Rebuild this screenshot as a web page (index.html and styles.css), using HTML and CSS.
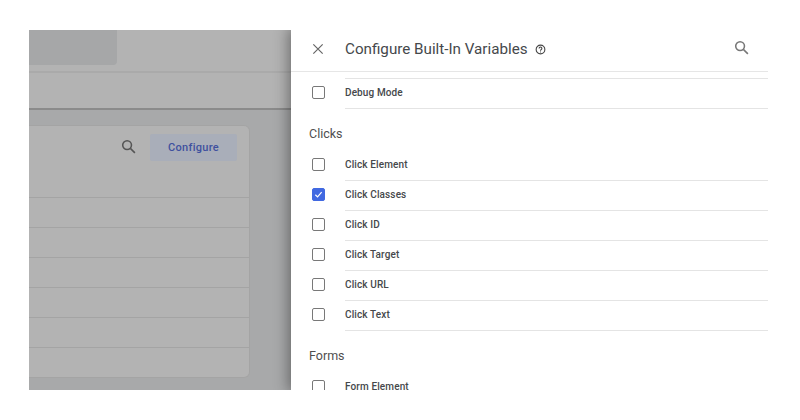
FILE: index.html
```html
<!DOCTYPE html>
<html lang="en">
<head>
<meta charset="utf-8">
<title>Configure Built-In Variables</title>
<link rel="stylesheet" href="styles.css">
</head>
<body>
<div class="frame">
  <div class="backdrop">
    <div class="topbar"><div class="tab"></div></div>
    <div class="subbar"></div>
    <div class="content">
      <div class="card">
        <div class="card-head">
          <svg class="icon-search" viewBox="0 0 24 24"><circle cx="10" cy="10" r="6.2"/><path d="M14.6 14.6 21 21"/></svg>
          <div class="btn">Configure</div>
        </div>
        <div class="card-row"></div>
        <div class="card-row"></div>
        <div class="card-row"></div>
        <div class="card-row"></div>
        <div class="card-row"></div>
        <div class="card-row"></div>
      </div>
    </div>
  </div>
  <div class="drawer">
    <div class="drawer-head">
      <svg class="icon-close" viewBox="0 0 24 24"><path d="M5 5 19 19M19 5 5 19"/></svg>
      <span class="title">Configure Built-In Variables</span>
      <svg class="icon-help" viewBox="0 0 24 24"><circle cx="12" cy="12" r="9.5"/><path d="M9 9.6a3 3 0 1 1 4.7 2.5c-1.100.7-1.700 1.300-1.700 2.400"/><path d="M12 16.400v2"/></svg>
      <svg class="icon-search drawer-search" viewBox="0 0 24 24"><circle cx="10" cy="10" r="6.2"/><path d="M14.6 14.6 21 21"/></svg>
    </div>
    <div class="list">
      <div class="row top"><span class="box"></span><span class="label">Debug Mode</span></div>
      <div class="group">Clicks</div>
      <div class="row"><span class="box"></span><span class="label">Click Element</span></div>
      <div class="row"><span class="box checked"><svg viewBox="0 0 14 14"><path d="M3 7.300 5.800 10 11 4"/></svg></span><span class="label">Click Classes</span></div>
      <div class="row"><span class="box"></span><span class="label">Click ID</span></div>
      <div class="row"><span class="box"></span><span class="label">Click Target</span></div>
      <div class="row"><span class="box"></span><span class="label">Click URL</span></div>
      <div class="row"><span class="box"></span><span class="label">Click Text</span></div>
      <div class="group">Forms</div>
      <div class="row"><span class="box"></span><span class="label">Form Element</span></div>
    </div>
  </div>
</div>
</body>
</html>
```
FILE: styles.css
```css
html, body { margin: 0; padding: 0; background: #fff; }
body { width: 800px; height: 420px; overflow: hidden; font-family: Roboto, "Liberation Sans", sans-serif; }
.frame { display: flex; width: 739px; height: 360px; margin: 30px 0 0 29px; overflow: hidden; }

.backdrop { width: 262px; flex: none; display: flex; flex-direction: column; background: #a8a9aa; }
.topbar { height: 41px; flex: none; background: #b3b3b3; border-bottom: 2px solid #aaa; }
.tab { width: 88px; height: 35px; background: #a6a7a8; border-radius: 0 0 4px 0; }
.subbar { height: 35px; flex: none; background: #b3b3b3; border-bottom: 2px solid #8b8b8b; }
.content { flex: 1; padding-top: 15px; }
.card { width: 221px; height: 253px; background: #b3b3b3; border: 1px solid #a4a4a4; border-left: 0; border-radius: 0 6px 6px 0; box-sizing: border-box; }
.card-head { height: 72px; display: flex; align-items: flex-start; justify-content: flex-end; padding: 8px 12px 0 0; gap: 13.500px; border-bottom: 1px solid #a4a4a4; box-sizing: border-box; }
.card-head .icon-search { margin-top: 4px; }
.btn { width: 87px; height: 27px; background: #a9aeb9; border-radius: 2px; color: #3f519f; font-size: 11px; font-weight: 500; letter-spacing: .3px; display: flex; align-items: center; justify-content: center; }
.card-row { height: 30px; border-bottom: 1px solid #a4a4a4; box-sizing: border-box; }
.card-row:last-child { border-bottom: 0; }

.icon-search { width: 17px; height: 17px; flex: none; fill: none; stroke: #555; stroke-width: 2.200; }

.drawer { flex: 1; position: relative; background: #fff; box-shadow: 0 0 14px 2px rgba(0, 0, 0, .42); display: flex; flex-direction: column; min-width: 0; }
.drawer-head { height: 42px; flex: none; display: flex; align-items: center; border-bottom: 1px solid #e6e6e6; box-sizing: border-box; padding-bottom: 4px; }
.icon-close { width: 16px; height: 16px; margin-left: 19px; fill: none; stroke: #666; stroke-width: 1.800; flex: none; }
.title { margin-left: 19px; font-size: 15.200px; color: #45484b; white-space: nowrap; }
.icon-help { width: 11px; height: 11px; margin: 2px 0 0 7px; fill: none; stroke: #444; stroke-width: 2.400; flex: none; }
.drawer-search { margin: 0 18px 2px auto; stroke: #777; }

.list { padding-top: 6px; }
.row { height: 30px; display: flex; align-items: center; box-sizing: border-box; }
.row.top { height: 31px; }
.row .label { flex: 1; align-self: stretch; margin-left: 20px; padding-bottom: 2px; display: flex; align-items: center; font-size: 10px; line-height: 1; font-weight: 500; letter-spacing: .12px; color: #45484b; border-bottom: 1px solid #e4e4e4; box-sizing: border-box; }
.row.top .label { border-top: 1px solid #e4e4e4; }
.box { width: 13px; height: 13px; margin: 0 0 3px 21px; flex: none; box-sizing: border-box; border: 1.500px solid #787878; border-radius: 2px; display: flex; }
.box.checked { background: #4169e1; border-color: #4169e1; }
.box svg { width: 100%; height: 100%; fill: none; stroke: #fff; stroke-width: 1.500; }
.group { height: 42px; padding: 17px 0 0 18px; box-sizing: border-box; font-size: 12.500px; color: #4f4f4f; }
```
